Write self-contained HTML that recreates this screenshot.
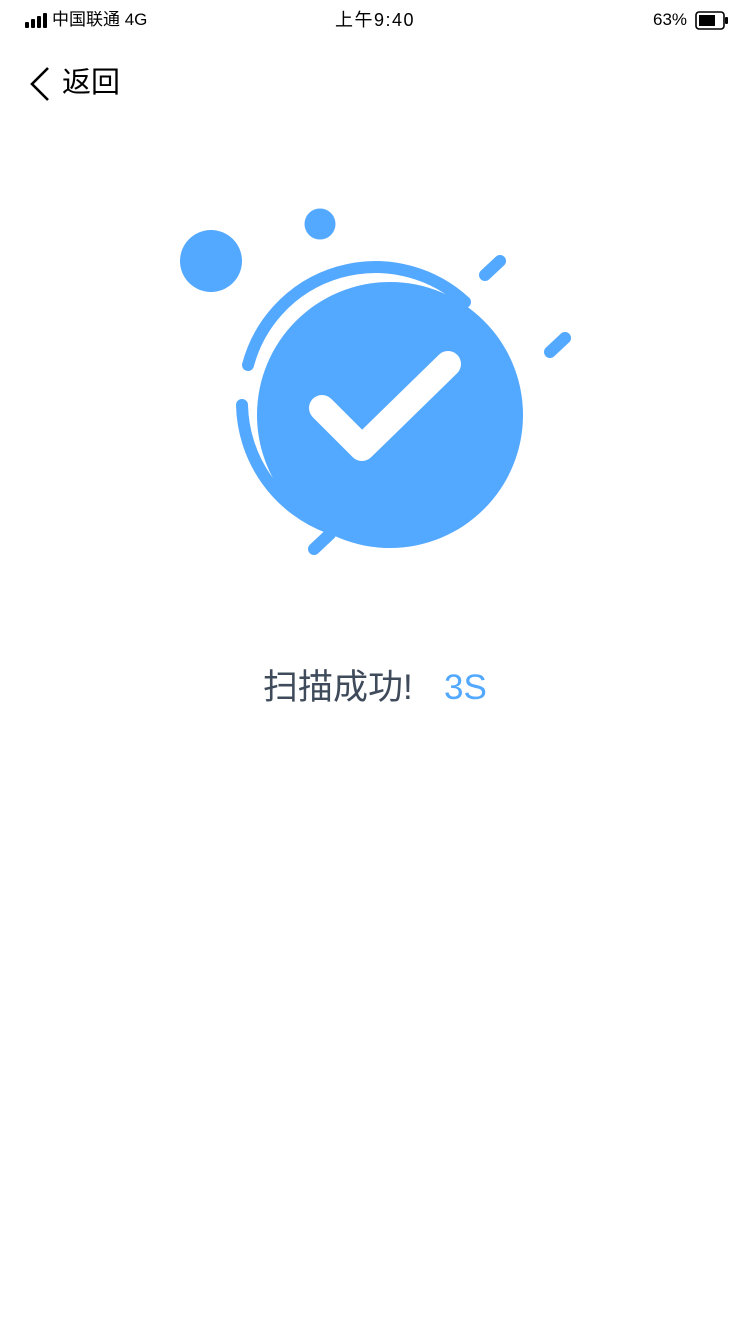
<!DOCTYPE html>
<html><head><meta charset="utf-8">
<style>
html,body{margin:0;padding:0;background:#fff;width:750px;height:1334px;overflow:hidden;position:relative;font-family:"Liberation Sans","Noto Sans CJK SC",sans-serif;}
.abs{position:absolute;white-space:nowrap;}
</style></head><body>
<svg class="abs" style="left:25px;top:12px" width="24" height="18" viewBox="0 0 24 18">
<rect x="0" y="10" width="4" height="6" rx="1" fill="#000"/>
<rect x="6" y="7" width="4" height="9" rx="1" fill="#000"/>
<rect x="12" y="4" width="4" height="12" rx="1" fill="#000"/>
<rect x="18" y="1" width="4" height="15" rx="1" fill="#000"/>
</svg>
<div class="abs" style="left:52px;top:10px;font-size:17px;color:#000;line-height:20px">中国联通 4G</div>
<div class="abs" style="left:335px;top:10px;font-size:18px;color:#000;line-height:20px;letter-spacing:1.5px">上午9:40</div>
<div class="abs" style="left:653px;top:10px;font-size:17px;color:#000;line-height:20px">63%</div>
<svg class="abs" style="left:695px;top:11px" width="34" height="20" viewBox="0 0 34 20">
<rect x="1" y="1" width="28" height="17" rx="3" fill="none" stroke="#000" stroke-width="1.6"/>
<rect x="4" y="4" width="16" height="11" fill="#000"/>
<rect x="30" y="6" width="3" height="7" rx="1" fill="#000"/>
</svg>
<svg class="abs" style="left:28px;top:66px" width="24" height="36" viewBox="0 0 24 36">
<path d="M20 2 L4 18 L20 34" fill="none" stroke="#000" stroke-width="2.6"/>
</svg>
<div class="abs" style="left:62px;top:66px;font-size:29px;color:#000;line-height:34px">返回</div>
<svg class="abs" style="left:0;top:0" width="750" height="600" viewBox="0 0 750 600">
<g fill="#53a8ff" stroke="#53a8ff">
<circle cx="211" cy="261" r="31" stroke="none"/>
<circle cx="320" cy="224" r="15.5" stroke="none"/>
<g stroke-width="12" stroke-linecap="round" fill="none">
<line x1="485" y1="275" x2="500" y2="261"/>
<line x1="550" y1="352" x2="565" y2="338"/>
<line x1="314" y1="549" x2="330" y2="534"/>
<path d="M248 365 A132 132 0 0 1 465 302"/>
<path d="M242 405 A134 134 0 0 0 330 528"/>
</g>
<circle cx="390" cy="415" r="133" stroke="none"/>
</g>
<polyline points="322,408 362,448 448,364" fill="none" stroke="#fff" stroke-width="26" stroke-linecap="round" stroke-linejoin="round"/>
</svg>
<div class="abs" style="left:263px;top:668px;font-size:35px;color:#3f4b5b;line-height:40px">扫描成功!</div>
<div class="abs" style="left:444px;top:668px;font-size:35px;color:#53a8ff;line-height:40px">3S</div>
</body></html>
